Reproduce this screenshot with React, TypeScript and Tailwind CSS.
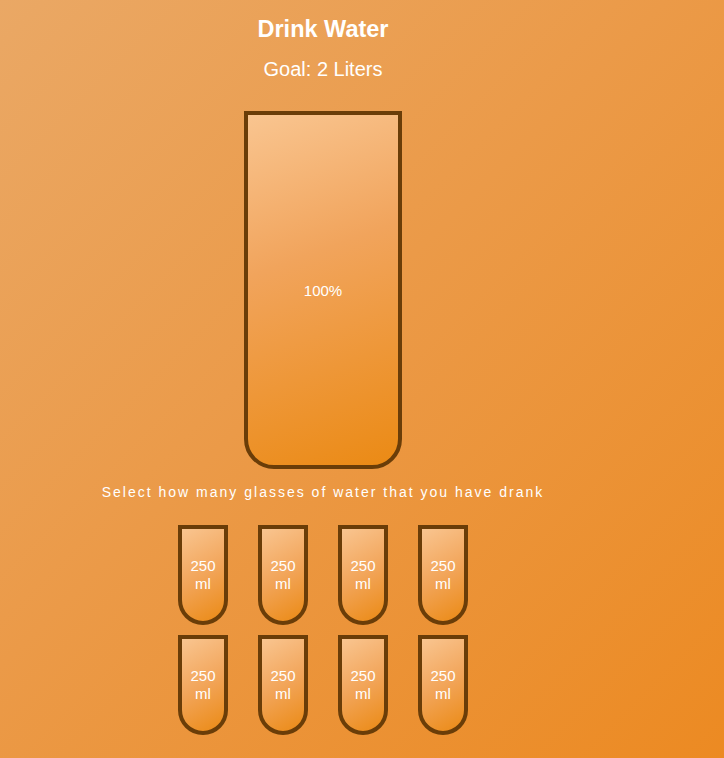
import React from 'react';

const SmallCup: React.FC = () => (
  <div className="w-[50px] h-[100px] border-4 border-[#6a3d08] rounded-b-[25px] bg-[linear-gradient(150deg,#f9c590_0%,#f2a55a_50%,#eb8a14_100%)] flex flex-col items-center justify-center text-white text-[15px] leading-[18px] text-center">
    <span>250</span>
    <span>ml</span>
  </div>
);

const App: React.FC = () => {
  const cups = Array.from({ length: 8 });

  return (
    <div
      className="min-h-screen w-full bg-[linear-gradient(135deg,#eaa865_0%,#eb9a48_45%,#ec8a22_100%)] text-white"
      style={{ fontFamily: '"Liberation Sans", Arial, sans-serif' }}
    >
      <div className="w-[646px] flex flex-col items-center pt-[16px]">
        <h1 className="text-[23.5px] font-bold leading-[27px]">Drink Water</h1>
        <h3 className="text-[20px] leading-[23px] mt-[15px]">Goal: 2 Liters</h3>

        {/* Big cup */}
        <div className="mt-[30px] w-[158px] h-[358px] border-4 border-[#6a3d08] rounded-b-[30px] bg-[linear-gradient(160deg,#f9c590_0%,#f1a45c_40%,#eb8a14_100%)] flex items-center justify-center">
          <span className="text-[15px] leading-[17px]">100%</span>
        </div>

        <p className="mt-[15px] text-[14px] leading-[16px] tracking-[2px]">
          Select how many glasses of water that you have drank
        </p>

        <div className="mt-[25px] grid grid-cols-4 gap-x-[30px] gap-y-[10px]">
          {cups.map((_, i) => (
            <SmallCup key={i} />
          ))}
        </div>
      </div>
    </div>
  );
};

export default App;
